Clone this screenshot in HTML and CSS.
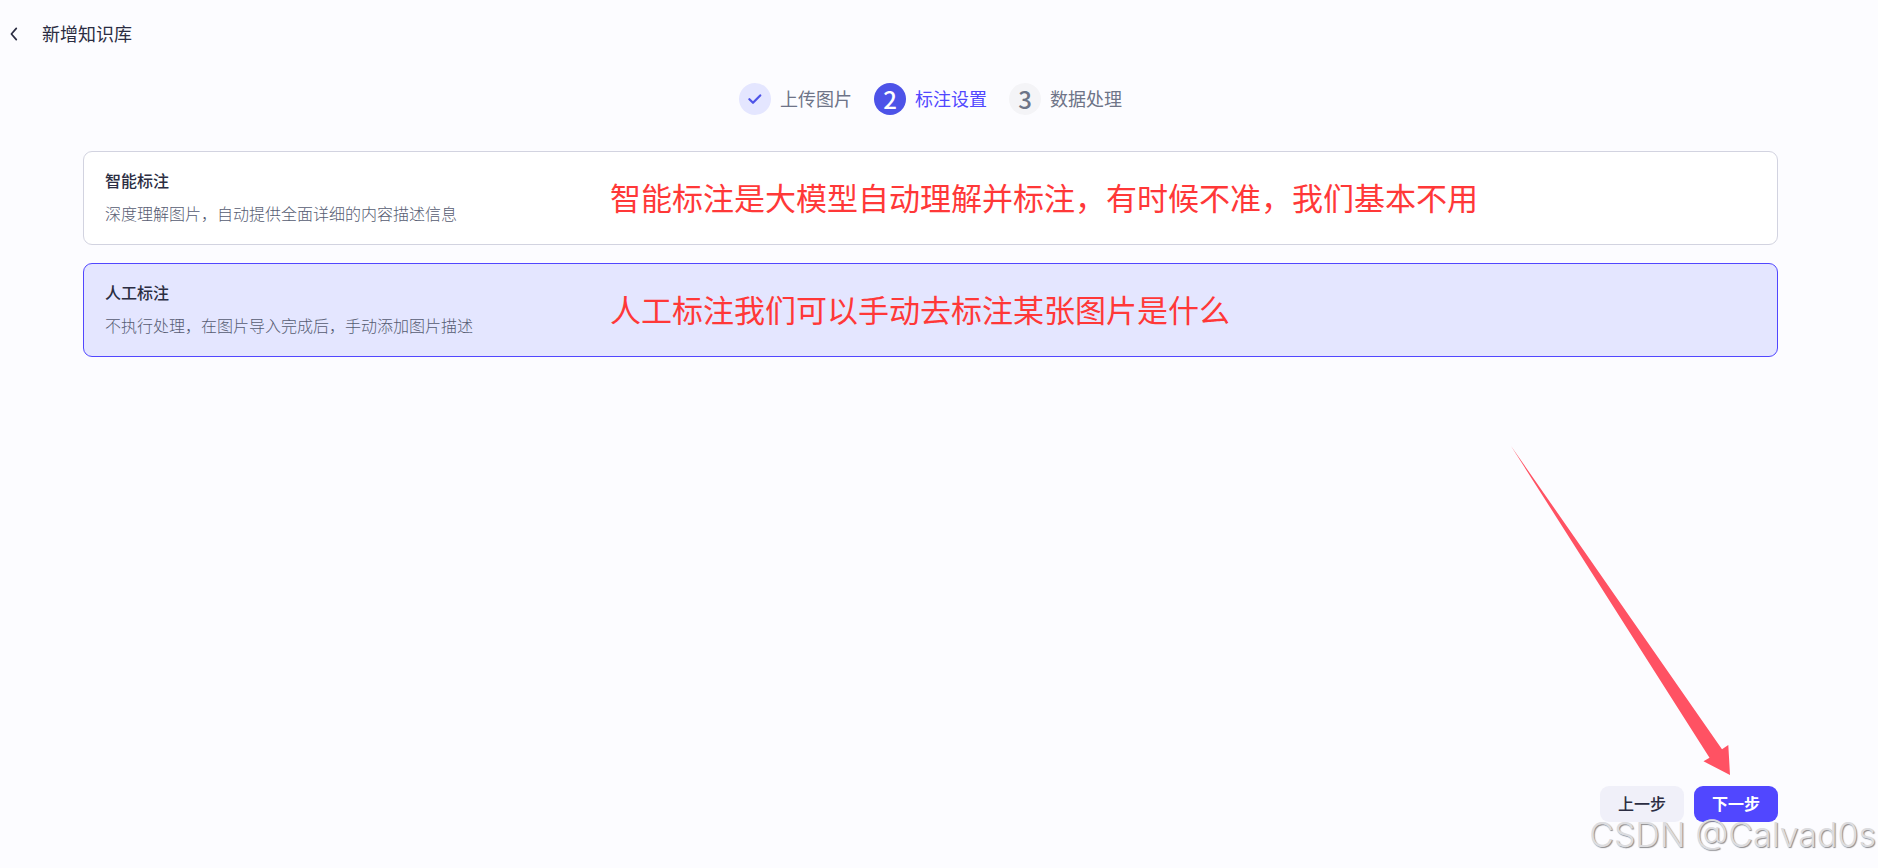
FILE: index.html
```html
<!DOCTYPE html>
<html lang="zh-CN">
<head>
<meta charset="utf-8">
<title>新增知识库</title>
<link rel="stylesheet" href="styles.css">
</head>
<body>
<div class="page">
  <header class="header">
    <button class="back" type="button" aria-label="返回">
      <svg width="8" height="14" viewBox="0 0 8 14" fill="none" stroke="currentColor" stroke-width="1.7" stroke-linecap="round" stroke-linejoin="round"><path d="M6.300 1.400 1.400 7l4.900 5.600"/></svg>
    </button>
    <h1 class="title">新增知识库</h1>
  </header>
  <main class="main">
    <ol class="steps">
      <li class="step step-done">
        <span class="step-icon"><svg width="14" height="12" viewBox="0 0 14 12" fill="none" stroke="currentColor" stroke-width="2.2" stroke-linecap="round" stroke-linejoin="round"><path d="M1.400 6.200 5 9.800l7.200-7.400"/></svg></span>
        <span class="step-label">上传图片</span>
      </li>
      <li class="step step-active" aria-current="step">
        <span class="step-icon">2</span>
        <span class="step-label">标注设置</span>
      </li>
      <li class="step">
        <span class="step-icon">3</span>
        <span class="step-label">数据处理</span>
      </li>
    </ol>
    <form class="form">
      <div class="options">
        <label class="option">
          <input class="option-radio" type="radio" name="mode" value="auto">
          <span class="option-title">智能标注</span>
          <span class="option-desc">深度理解图片，自动提供全面详细的内容描述信息</span>
          <span class="note">智能标注是大模型自动理解并标注，有时候不准，我们基本不用</span>
        </label>
        <label class="option">
          <input class="option-radio" type="radio" name="mode" value="manual" checked>
          <span class="option-title">人工标注</span>
          <span class="option-desc">不执行处理，在图片导入完成后，手动添加图片描述</span>
          <span class="note">人工标注我们可以手动去标注某张图片是什么</span>
        </label>
      </div>
      <div class="actions">
        <button class="btn" type="button">上一步</button>
        <button class="btn btn-primary" type="button">下一步</button>
        <svg class="arrow" width="220" height="330" viewBox="0 0 220 330" aria-hidden="true"><path fill="#ff5263" d="M0 0 211 303.200 217.300 299 219 329 192.500 315.300 198.500 311.700Z"/></svg>
      </div>
    </form>
  </main>
  <div class="watermark">CSDN @Calvad0s</div>
</div>
</body>
</html>
```
FILE: styles.css
```css
* {
  box-sizing: border-box;
}

body {
  margin: 0;
  background: #fcfcff;
  color: #2b2d42;
  font-family: "Noto Sans CJK SC", sans-serif;
  font-size: 16px;
  line-height: 24px;
}

button {
  border: 0;
  font: inherit;
  color: inherit;
  cursor: pointer;
}

.page {
  position: relative;
  display: flex;
  flex-direction: column;
  min-height: 100vh;
}

.header {
  display: flex;
  align-items: center;
  gap: 24px;
  height: 67px;
  padding-left: 10px;
}

.back {
  display: flex;
  padding: 0;
  background: none;
}

.title {
  margin: 0;
  padding-bottom: 1px;
  font-size: 18px;
  font-weight: 400;
}

.main {
  display: flex;
  flex: 1;
  flex-direction: column;
  padding: 16px 100px 46px 83px;
}

.steps {
  display: flex;
  justify-content: center;
  gap: 22px;
  margin: 0 0 36px;
  padding: 0;
  list-style: none;
}

.step {
  display: flex;
  align-items: center;
  gap: 9px;
  color: #6e7488;
  font-size: 18px;
}

.step-icon {
  display: flex;
  align-items: center;
  justify-content: center;
  width: 32px;
  height: 32px;
  border-radius: 50%;
  background: #f4f4f7;
  font-size: 24px;
  font-weight: 500;
}

.step-label {
  padding-bottom: 2px;
}

.step-done .step-icon {
  background: #e4e6ff;
  color: #4d53e8;
}

.step-active {
  color: #5147ff;
}

.step-active .step-icon {
  background: #4d53e8;
  color: #fff;
}

.form {
  display: flex;
  flex: 1;
  flex-direction: column;
  justify-content: space-between;
}

.options {
  display: flex;
  flex-direction: column;
  gap: 18px;
}

.option {
  position: relative;
  display: flex;
  flex-direction: column;
  gap: 9px;
  padding: 16px 21px 19px;
  border: 1px solid #d2d3e0;
  border-radius: 9px;
  background: #fff;
  cursor: pointer;
}

.option:has(:checked) {
  border-color: #5147ff;
  background: #e4e6ff;
}

.option-radio {
  position: absolute;
  margin: 0;
  opacity: 0;
}

.option-title {
  font-weight: 500;
}

.option-desc {
  color: #565c72;
  font-weight: 300;
}

.note {
  position: absolute;
  top: 0;
  bottom: 0;
  left: 526px;
  display: flex;
  align-items: center;
  padding-bottom: 3px;
  color: #ff3838;
  font-size: 31px;
  white-space: nowrap;
}

.actions {
  position: relative;
  display: flex;
  justify-content: flex-end;
  gap: 10px;
}

.btn {
  width: 84px;
  height: 36px;
  padding: 0 0 3px;
  border-radius: 9px;
  background: #f0f0f9;
  font-weight: 500;
}

.btn-primary {
  background: #5147ff;
  color: #fff;
  font-weight: 700;
}

.arrow {
  position: absolute;
  right: 47px;
  bottom: 46px;
  pointer-events: none;
}

.watermark {
  position: absolute;
  right: 2px;
  bottom: 13px;
  color: #dcdcdf;
  font-family: Inter, sans-serif;
  font-size: 34px;
  font-weight: 300;
  line-height: 40px;
  text-shadow: 1px 1px 1px #8c8c90;
  pointer-events: none;
}
```
